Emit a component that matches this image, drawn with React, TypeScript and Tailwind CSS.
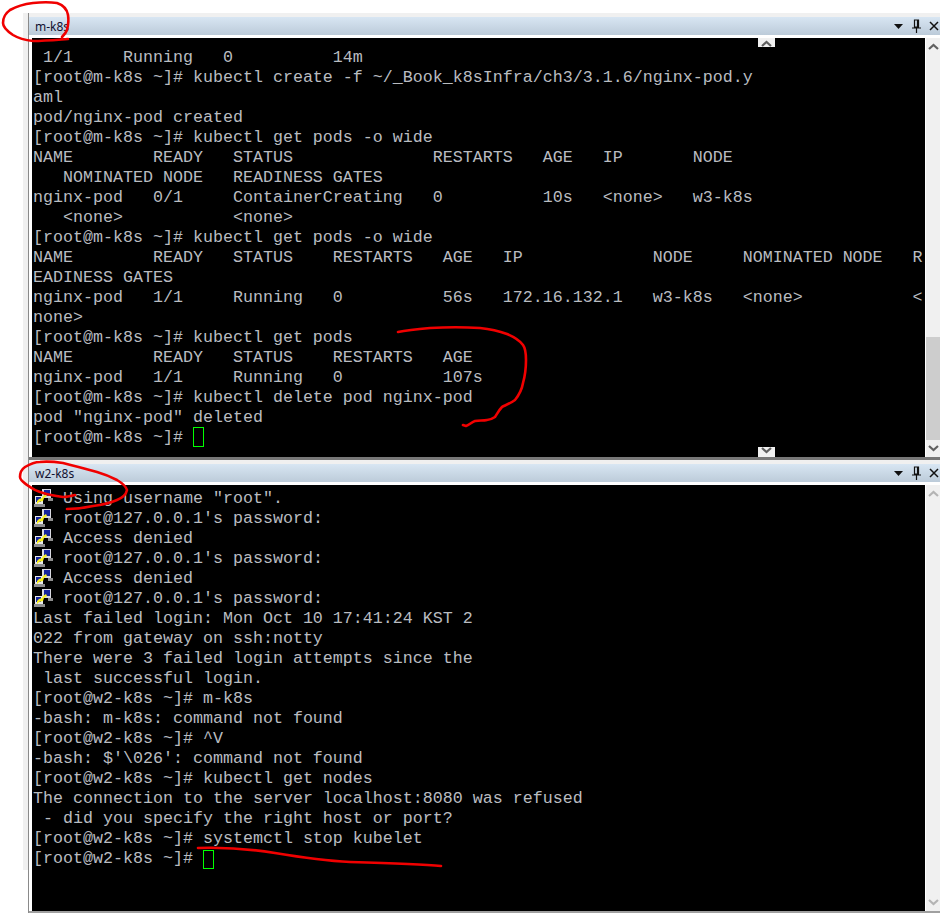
import type { ReactNode } from "react";

const topLines = [
  " 1/1     Running   0          14m",
  "[root@m-k8s ~]# kubectl create -f ~/_Book_k8sInfra/ch3/3.1.6/nginx-pod.y",
  "aml",
  "pod/nginx-pod created",
  "[root@m-k8s ~]# kubectl get pods -o wide",
  "NAME        READY   STATUS              RESTARTS   AGE   IP       NODE",
  "   NOMINATED NODE   READINESS GATES",
  "nginx-pod   0/1     ContainerCreating   0          10s   <none>   w3-k8s",
  "   <none>           <none>",
  "[root@m-k8s ~]# kubectl get pods -o wide",
  "NAME        READY   STATUS    RESTARTS   AGE   IP             NODE     NOMINATED NODE   R",
  "EADINESS GATES",
  "nginx-pod   1/1     Running   0          56s   172.16.132.1   w3-k8s   <none>           <",
  "none>",
  "[root@m-k8s ~]# kubectl get pods",
  "NAME        READY   STATUS    RESTARTS   AGE",
  "nginx-pod   1/1     Running   0          107s",
  "[root@m-k8s ~]# kubectl delete pod nginx-pod",
  'pod "nginx-pod" deleted',
];

const loginLines = [
  'Using username "root".',
  "root@127.0.0.1's password:",
  "Access denied",
  "root@127.0.0.1's password:",
  "Access denied",
  "root@127.0.0.1's password:",
];

const bottomLines = [
  "Last failed login: Mon Oct 10 17:41:24 KST 2",
  "022 from gateway on ssh:notty",
  "There were 3 failed login attempts since the",
  " last successful login.",
  "[root@w2-k8s ~]# m-k8s",
  "-bash: m-k8s: command not found",
  "[root@w2-k8s ~]# ^V",
  "-bash: $'\\026': command not found",
  "[root@w2-k8s ~]# kubectl get nodes",
  "The connection to the server localhost:8080 was refused",
  " - did you specify the right host or port?",
  "[root@w2-k8s ~]# systemctl stop kubelet",
];

function Chevron({ up, disabled }: { up?: boolean; disabled?: boolean }) {
  return (
    <svg width="11" height="7" viewBox="0 0 11 7" className={disabled ? "text-[#b4b4b4]" : "text-[#606060]"}>
      <path d={up ? "M1 6 L5.5 2 L10 6" : "M1 1 L5.5 5 L10 1"} fill="none" stroke="currentColor" strokeWidth="2.2" />
    </svg>
  );
}

function TitleBar({ title }: { title: string }) {
  return (
    <div className="h-[18px] flex items-center bg-gradient-to-b from-[#d8e6f3] to-[#bccbd9] pl-[6px] text-[12px] text-[#101030] font-['Noto_Sans',sans-serif]">
      <span className="flex-1 pt-[1px]">{title}</span>
      <svg width="9" height="5" viewBox="0 0 9 5" className="mr-[9px]">
        <path d="M0 0H9L4.5 5Z" fill="#111" />
      </svg>
      <svg width="9" height="14" viewBox="0 0 9 14" className="mr-[8px]">
        <path d="M2.5 1H6.5V8H2.5ZM0 9H9M4.5 9V14M5.5 1V8" fill="none" stroke="#111" strokeWidth="1.2" />
      </svg>
      <svg width="10" height="10" viewBox="0 0 10 10" className="mr-[1px]">
        <path d="M1 1L9 9M9 1L1 9" fill="none" stroke="#111" strokeWidth="1.5" />
      </svg>
    </div>
  );
}

function KeyIcon() {
  return (
    <svg width="19" height="19" viewBox="0 0 19 19" className="shrink-0 self-start ml-[1px] mr-[10px]" shapeRendering="crispEdges">
      <rect x="8" y="0" width="9" height="9" fill="#d8d8e0" />
      <rect x="10" y="1" width="6" height="6" fill="#14249c" />
      <rect x="14" y="9" width="5" height="3" fill="#8c8c8c" />
      <rect x="1" y="7" width="8" height="9" fill="#e8e8e8" />
      <rect x="2" y="8" width="5" height="5" fill="#14249c" />
      <rect x="0" y="15" width="11" height="3" fill="#8c8c8c" />
      <path d="M12 5L13 7L10 9L9 12L5 13L3 15L3 12L5 10L8 9L9 7Z" fill="#f8f020" shapeRendering="auto" />
    </svg>
  );
}

function Line({ children }: { children: ReactNode }) {
  return <div className="h-[20px] leading-[20px] whitespace-pre">{children}</div>;
}

function Terminal({ children, className }: { children: ReactNode; className: string }) {
  return (
    <div className={`flex-1 bg-black pl-[1px] overflow-hidden border-l-[3px] border-l-white text-[#b9bcc0] text-[16.67px] font-['Liberation_Mono',monospace] ${className}`}>
      {children}
    </div>
  );
}

function Scrollbar({ disabled, thumb }: { disabled?: boolean; thumb?: boolean }) {
  return (
    <div className="w-[15px] border-l border-l-white bg-[#f0f0f0] flex flex-col items-center">
      <div className="h-[17px] flex items-center">
        <Chevron up disabled={disabled} />
      </div>
      <div className="flex-1 w-full flex flex-col justify-end">
        {thumb && <div className="h-[103px] bg-[#cdcdcd]" />}
      </div>
      <div className="h-[17px] flex items-center">
        <Chevron disabled={disabled} />
      </div>
    </div>
  );
}

export default function App() {
  return (
    <div className="relative w-[940px] h-[913px] bg-white overflow-hidden">
      <div className="h-[13px]" />
      <div className="flex h-[900px]">
        <div className="w-[23px]" />
        <div className="w-[5px] h-[857px] bg-[#f0f0f0]" />
        <div className="flex-1 flex flex-col border-l border-l-[#8a8a8a]">
          <div className="h-[4px] bg-[#f0f0f0]" />
          <TitleBar title="m-k8s" />
          <div className="h-[3px] bg-white" />
          <div className="h-[419px] flex relative">
            <Terminal className="pt-[10px]">
              {topLines.map((line, i) => (
                <Line key={i}>{line}</Line>
              ))}
              <Line>
                {"[root@m-k8s ~]# "}
                <span className="inline-block align-top -mt-[1px] w-[11px] h-[20px] border border-[#00ff00]" />
              </Line>
            </Terminal>
            <Scrollbar thumb />
            <div className="absolute left-[729px] top-0 w-[17px] h-[9px] bg-[#f0f0f0] flex items-end justify-center">
              <Chevron up />
            </div>
            <div className="absolute left-[729px] bottom-0 w-[17px] h-[10px] bg-[#f0f0f0] flex items-start justify-center">
              <Chevron />
            </div>
          </div>
          <div className="h-[3px] bg-[#777777]" />
          <div className="h-[4px] bg-[#f0f0f0]" />
          <TitleBar title="w2-k8s" />
          <div className="h-[3px] bg-white" />
          <div className="flex-1 flex">
            <Terminal className="pt-[4px]">
              {loginLines.map((line, i) => (
                <div key={i} className="flex h-[20px]">
                  <KeyIcon />
                  <span className="leading-[20px] whitespace-pre">{line}</span>
                </div>
              ))}
              {bottomLines.map((line, i) => (
                <Line key={i}>{line}</Line>
              ))}
              <Line>
                {"[root@w2-k8s ~]# "}
                <span className="inline-block align-top mt-[1px] w-[11px] h-[19px] border border-[#00ff00]" />
              </Line>
            </Terminal>
            <Scrollbar disabled />
          </div>
          <div className="h-[2px] bg-[#a0a0a0]" />
        </div>
      </div>
      {/* marker annotations drawn over the screenshot */}
      <svg className="absolute inset-0" width="940" height="913" fill="none" stroke="#f00000" strokeWidth="2.6" strokeLinecap="round" strokeLinejoin="round">
        <path d="M68 39C55 40 45 41 33 41C24 40 18 38 13 35C7 31 3 27 3 23C3 16 6 13 10 10C17 6 25 4 33 3C42 2 50 2 57 3C63 5 67 9 68 15C69 21 68 26 67 30C66 33 64 35 62 37" />
        <path d="M75 495C71 496 67 497 63 497C56 496 49 495 43 493C36 491 31 488 27 485C23 482 20 480 20 477C20 472 22 469 25 467C30 464 35 462 40 462C48 461 56 462 63 463C75 466 86 469 97 472C104 474 111 477 117 480C122 483 126 486 127 490C126 495 122 498 117 500C110 503 101 505 93 506C84 508 75 509 67 509" />
        <path d="M398 332C408 330 419 329 430 328C447 327 464 327 480 328C490 329 499 331 507 334C514 337 520 341 523 345C526 349 526 354 526 360C526 368 525 376 523 383C522 389 519 395 515 400C511 403 506 405 502 407C499 410 497 414 495 417C492 419 490 420 487 420C483 421 479 420 475 421C472 422 469 425 466 426L463 425" />
        <path d="M198 848C225 847 250 849 275 853C305 858 330 861 350 862C385 863 420 864 441 866" />
      </svg>
    </div>
  );
}
